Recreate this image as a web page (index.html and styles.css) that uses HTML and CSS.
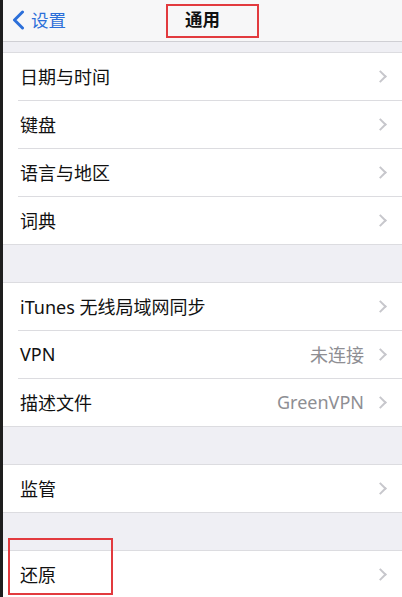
FILE: index.html
```html
<!DOCTYPE html>
<html lang="zh-CN">
<head>
    <meta charset="UTF-8">
    <meta name="viewport" content="width=device-width, initial-scale=1.0">
    <title>通用</title>
    <link rel="stylesheet" href="styles.css">
</head>
<body>
<div class="screen">
    <header class="navbar">
        <a class="back">
            <svg width="14" height="20" viewBox="0 0 14 20"><path d="M11.5 2 3.5 10l8 8" fill="none" stroke="#2c6fd9" stroke-width="3" stroke-linecap="round" stroke-linejoin="round"/></svg>
            <span>设置</span>
        </a>
        <h1 class="title">通用</h1>
    </header>

    <div class="gap small"></div>
    <ul class="group">
        <li class="row"><span class="label">日期与时间</span><i class="chev"></i></li>
        <li class="row"><span class="label">键盘</span><i class="chev"></i></li>
        <li class="row"><span class="label">语言与地区</span><i class="chev"></i></li>
        <li class="row"><span class="label">词典</span><i class="chev"></i></li>
    </ul>

    <div class="gap"></div>
    <ul class="group">
        <li class="row"><span class="label">iTunes 无线局域网同步</span><i class="chev"></i></li>
        <li class="row"><span class="label">VPN</span><span class="value">未连接</span><i class="chev"></i></li>
        <li class="row"><span class="label">描述文件</span><span class="value">GreenVPN</span><i class="chev"></i></li>
    </ul>

    <div class="gap"></div>
    <ul class="group">
        <li class="row"><span class="label">监管</span><i class="chev"></i></li>
    </ul>

    <div class="gap"></div>
    <ul class="group">
        <li class="row"><span class="label">还原</span><i class="chev"></i></li>
    </ul>

    <div class="mark mark-title"></div>
    <div class="mark mark-reset"></div>
</div>
</body>
</html>
```
FILE: styles.css
```css
body {
    margin: 0;
    background: #1e1e1e;
}

ul {
    margin: 0;
    padding: 0;
    list-style: none;
}

.screen {
    position: relative;
    height: 597px;
    overflow: hidden;
    border-left: 3px solid #1e1e1e;
    background: #efeff4;
    font-family: "Noto Sans", "Noto Sans CJK SC", sans-serif;
    color: #111;
}

.navbar {
    position: relative;
    height: 41px;
    display: flex;
    align-items: center;
    justify-content: center;
    background: #f7f7f8;
    border-bottom: 1px solid #cfcfd4;
}

.back {
    position: absolute;
    left: 8px;
    top: 0;
    height: 39px;
    display: flex;
    align-items: center;
    gap: 6px;
    color: #2c6fd9;
    font-size: 17.5px;
}

.title {
    margin: 0 0 4px 0;
    font-size: 17.5px;
    font-weight: bold;
}

.gap {
    height: 37px;
}

.gap.small {
    height: 10px;
}

.group {
    background: #fff;
    border-top: 1px solid #dcdce0;
    border-bottom: 1px solid #dcdce0;
}

.row {
    height: 45px;
    margin-left: 15px;
    padding: 0 14px 2px 2px;
    display: flex;
    align-items: center;
    font-size: 18px;
    border-bottom: 1px solid #dcdce0;
}

.row:last-child {
    border-bottom: none;
}

.label {
    flex: 1;
}

.value {
    color: #8e8e93;
    margin-right: 12px;
}

.chev {
    width: 7px;
    height: 7px;
    margin: 2px 3px 0 0;
    border-top: 2px solid #c7c7cc;
    border-right: 2px solid #c7c7cc;
    transform: rotate(45deg);
}

.mark {
    position: absolute;
    border: 2px solid #e23a3e;
}

.mark-title {
    left: 163px;
    top: 4px;
    width: 89px;
    height: 30px;
}

.mark-reset {
    left: 5px;
    top: 538px;
    width: 101px;
    height: 53px;
}
```
